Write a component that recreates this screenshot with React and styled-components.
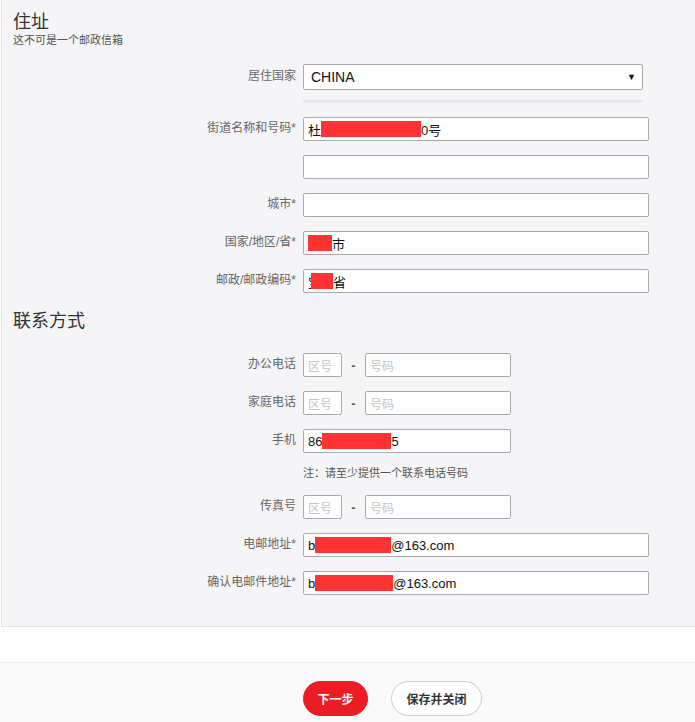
import React from 'react'
import styled, { createGlobalStyle } from 'styled-components'

const GlobalStyle = createGlobalStyle`
  body {
    margin: 0;
    background: #fff;
    font-family: Arial, "Liberation Sans", "Noto Sans CJK SC", sans-serif;
  }
`

const Panel = styled.div`
  margin-left: 1px;
  background: #f5f5f7;
  border: 1px solid #e2e2e4;
  border-top: none;
  border-right: none;
  padding: 12px 0 31px 0;
`

const Title = styled.h2`
  margin: 0 0 0 11px;
  font-size: 18px;
  line-height: 20px;
  font-weight: 400;
  color: #333;
`

const Sub = styled.div`
  margin: 1px 0 0 11px;
  font-size: 11px;
  line-height: 14px;
  color: #555;
`

const Row = styled.div`
  display: grid;
  grid-template-columns: 294px auto;
  column-gap: 7px;
  align-items: center;
  margin-top: ${({ $mt }) => $mt ?? 14}px;
`

const Label = styled.label`
  text-align: right;
  font-size: 12px;
  line-height: 14px;
  padding-bottom: 3px;
  color: #666;
  white-space: nowrap;
`

const Select = styled.div`
  box-sizing: border-box;
  width: 340px;
  height: 26px;
  background: #fff;
  border: 1px solid #aaa;
  border-radius: 2px;
  display: flex;
  align-items: center;
  justify-content: space-between;
  padding: 0 6px 0 7px;
  font-size: 14px;
  color: #111;
`

const Arrow = styled.span`
  font-size: 9px;
  color: #111;
`

const Divider = styled.div`
  margin: 10px 0 0 301px;
  width: 340px;
  height: 2px;
  background: #e8e8ea;
  box-shadow: 0 1px 1px #eeeef0;
`

const Field = styled.div`
  box-sizing: border-box;
  width: ${({ $w }) => $w}px;
  height: 24px;
  background: #fff;
  border: 1px solid #aaa;
  border-radius: 2px;
  display: flex;
  align-items: center;
  padding: 0 4px;
  font-size: 13px;
  color: #111;
  white-space: nowrap;
  overflow: hidden;
`

const Placeholder = styled.span`
  font-size: 12px;
  color: #c4c4c4;
`

const Redact = styled.span`
  display: inline-block;
  width: ${({ $w }) => $w}px;
  height: 16px;
  background: #ff3333;
  margin-left: ${({ $ml }) => $ml ?? 0}px;
`

const PhoneGroup = styled.div`
  display: flex;
  align-items: center;
`

const Dash = styled.span`
  width: 23px;
  text-align: center;
  font-size: 13px;
  font-weight: 700;
  color: #555;
`

const Section = styled.h2`
  margin: 18px 0 0 11px;
  font-size: 18px;
  line-height: 20px;
  font-weight: 400;
  color: #333;
`

const Note = styled.div`
  margin: 13px 0 0 301px;
  font-size: 11px;
  line-height: 14px;
  color: #555;
`

const Footer = styled.div`
  margin-top: 35px;
  background: #fafafa;
  border-top: 1px solid #f0f0f0;
  padding: 18px 0 10px 303px;
  display: flex;
  gap: 23px;
`

const Pill = styled.button`
  height: 35px;
  padding: 0 13px;
  border-radius: 18px;
  font-family: inherit;
  font-size: 12px;
  font-weight: 700;
  background: ${({ $primary }) => ($primary ? '#ec1c24' : '#fff')};
  color: ${({ $primary }) => ($primary ? '#fff' : '#333')};
  border: 1px solid ${({ $primary }) => ($primary ? '#ec1c24' : '#ccc')};
  min-width: ${({ $primary }) => ($primary ? 65 : 91)}px;
`

function Phone({ label, mt }) {
  return (
    <Row $mt={mt}>
      <Label>{label}</Label>
      <PhoneGroup>
        <Field $w={39}><Placeholder>区号</Placeholder></Field>
        <Dash>-</Dash>
        <Field $w={146}><Placeholder>号码</Placeholder></Field>
      </PhoneGroup>
    </Row>
  )
}

export default function App() {
  return (
    <>
      <GlobalStyle />
      <Panel>
        <Title>住址</Title>
        <Sub>这不可是一个邮政信箱</Sub>
        <Row $mt={17}>
          <Label>居住国家</Label>
          <Select>CHINA<Arrow>▼</Arrow></Select>
        </Row>
        <Divider />
        <Row $mt={15}>
          <Label>街道名称和号码*</Label>
          <Field $w={346}>杜<Redact $w={100} />0号</Field>
        </Row>
        <Row>
          <Label></Label>
          <Field $w={346}></Field>
        </Row>
        <Row>
          <Label>城市*</Label>
          <Field $w={346}></Field>
        </Row>
        <Row>
          <Label>国家/地区/省*</Label>
          <Field $w={346}><Redact $w={24} />市</Field>
        </Row>
        <Row>
          <Label>邮政/邮政编码*</Label>
          <Field $w={346}>宝<Redact $w={22} $ml={-10} />省</Field>
        </Row>

        <Section>联系方式</Section>
        <Phone label="办公电话" mt={22} />
        <Phone label="家庭电话" />
        <Row>
          <Label>手机</Label>
          <Field $w={208}>86<Redact $w={69} />5</Field>
        </Row>
        <Note>注：请至少提供一个联系电话号码</Note>
        <Phone label="传真号" mt={15} />
        <Row>
          <Label>电邮地址*</Label>
          <Field $w={346}>b<Redact $w={76} />@163.com</Field>
        </Row>
        <Row>
          <Label>确认电邮件地址*</Label>
          <Field $w={346}>b<Redact $w={78} />@163.com</Field>
        </Row>
      </Panel>
      <Footer>
        <Pill $primary>下一步</Pill>
        <Pill>保存并关闭</Pill>
      </Footer>
    </>
  )
}
